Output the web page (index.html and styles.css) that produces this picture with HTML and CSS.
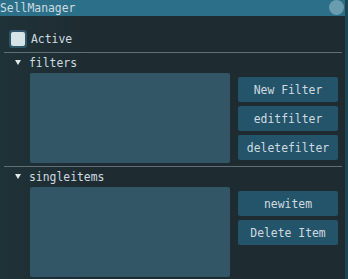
FILE: index.html
```html
<!DOCTYPE html>
<html lang="en">
<head>
  <meta charset="UTF-8" />
  <title>SellManager</title>
  <link rel="stylesheet" href="styles.css">
</head>
<body>
  <div class="window">
    <div class="titlebar">
      <span class="title">SellManager</span>
      <span class="close"></span>
    </div>

    <label class="active-row">
      <span class="checkbox"><span class="check-inner"></span></span>
      <span>Active</span>
    </label>

    <div class="sep"></div>

    <div class="section-head">
      <svg class="arrow" width="6" height="5" viewBox="0 0 6 5"><polygon points="0,0 6,0 3,5" fill="#dfe8eb"/></svg>
      <span>filters</span>
    </div>
    <div class="section-body">
      <div class="listbox"></div>
      <div class="buttons">
        <button>New Filter</button>
        <button>editfilter</button>
        <button>deletefilter</button>
      </div>
    </div>

    <div class="sep sep-2"></div>

    <div class="section-head">
      <svg class="arrow" width="6" height="5" viewBox="0 0 6 5"><polygon points="0,0 6,0 3,5" fill="#dfe8eb"/></svg>
      <span>singleitems</span>
    </div>
    <div class="section-body">
      <div class="listbox"></div>
      <div class="buttons">
        <button>newitem</button>
        <button>Delete Item</button>
      </div>
    </div>
  </div>
</body>
</html>
```

FILE: styles.css
```css
html, body {
  margin: 0;
  width: 348px;
  height: 279px;
  overflow: hidden;
}

body {
  background: #1e2c32;
  font-family: 'DejaVu Sans Mono', monospace;
  font-size: 11.4px;
  color: #cfdbe0;
}

.window {
  width: 345px;
  height: 279px;
  border-right: 3px solid #1d4554;
  background: linear-gradient(90deg, #1f3237 0%, #1e2c32 25%, #1e2b31 100%);
}

.titlebar {
  height: 16px;
  background: #2b7088;
  display: flex;
  align-items: center;
  justify-content: space-between;
}

.title {
  line-height: 16px;
}

.close {
  width: 15px;
  height: 15px;
  border-radius: 50%;
  background: #6a9caf;
  margin-right: 1px;
  margin-bottom: 1px;
}

.active-row {
  display: flex;
  align-items: center;
  gap: 4px;
  margin-top: 14px;
  padding-left: 9px;
  height: 18px;
}

.checkbox {
  width: 18px;
  height: 18px;
  box-sizing: border-box;
  border: 2px solid #2e5568;
  border-radius: 3px;
  background: #2e5568;
  display: flex;
}

.check-inner {
  flex: 1;
  background: #d8e3e8;
  border-radius: 2px;
}

.sep {
  height: 1px;
  background: #5f6f75;
  margin: 4px 3px 0 4px;
}

.sep-2 {
  margin-top: 3px;
}

.section-head {
  height: 20px;
  display: flex;
  align-items: center;
  padding-left: 15px;
  gap: 8px;
}

.arrow {
  margin-top: -2px;
}

.section-body {
  display: flex;
  padding-left: 30px;
  gap: 8px;
}

.listbox {
  width: 200px;
  height: 90px;
  background: #335667;
  border-radius: 2px;
}

.buttons {
  display: flex;
  flex-direction: column;
  gap: 4px;
  padding-top: 4px;
}

button {
  width: 100px;
  height: 25px;
  margin: 0;
  padding: 0;
  border: none;
  border-radius: 2px;
  background: #24546a;
  color: #cfdbe0;
  font-family: 'DejaVu Sans Mono', monospace;
  font-size: 11.4px;
}
```
